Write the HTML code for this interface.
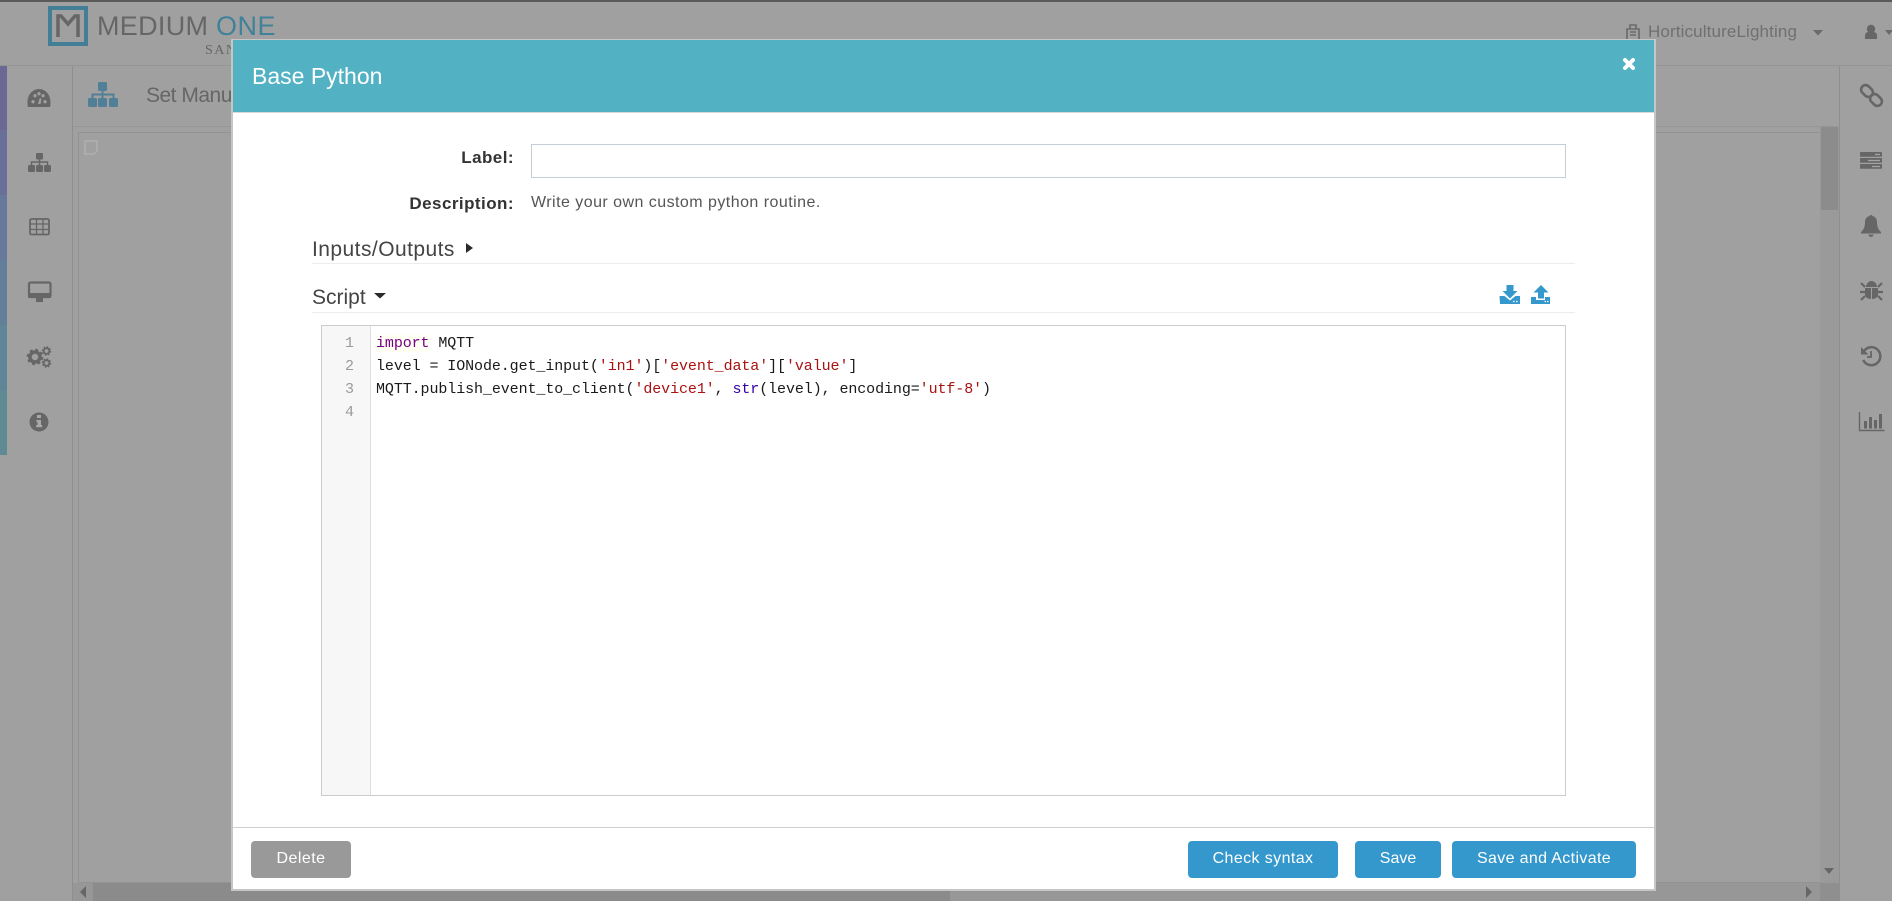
<!DOCTYPE html>
<html lang="en">
<head>
<meta charset="utf-8">
<title>Base Python</title>
<style>
html,body{margin:0;padding:0;width:1892px;height:901px;overflow:hidden;background:#a0a0a0;font-family:"Liberation Sans",sans-serif}
div,span,button,input,pre,svg{box-sizing:border-box}
.a{position:absolute}
.t{position:absolute;white-space:nowrap;line-height:1}
svg{position:absolute;overflow:visible}
.strip{position:absolute;left:0;width:7px;height:65px}
.modal{position:absolute;left:231px;top:39px;width:1425px;height:852px;background:#fff;border:2px solid #c6c6c6;border-top-width:1px;}
button{position:absolute;top:841px;height:37px;border:0;border-radius:4px;background:#3498cd;color:#fff;font:16px "Liberation Sans",sans-serif;padding:0 0 2px 0;text-align:center}
.code{position:absolute;left:376px;top:332px;margin:0;font:15px/23px "Liberation Mono",monospace;letter-spacing:-.09px;color:#1a1a1a;white-space:pre}
.k{color:#770088;background:#fffef2}.s{color:#aa1111}.b{color:#3300aa}
.n{position:absolute;left:322px;width:32px;text-align:right;font:15px/23px "Liberation Mono",monospace;color:#9a9a9a}
</style>
</head>
<body>
<!-- page behind overlay -->
<div class="a" style="left:0;top:0;width:1892px;height:2px;background:#5a5a5a"></div>
<div class="a" style="left:0;top:65px;width:1892px;height:1px;background:#959595"></div>
<div class="strip" style="top:66px;background:#6b6894"></div>
<div class="strip" style="top:130px;background:#686f98"></div>
<div class="strip" style="top:195px;background:#66799a"></div>
<div class="strip" style="top:260px;background:#617f98"></div>
<div class="strip" style="top:325px;background:#5f8596"></div>
<div class="strip" style="top:390px;background:#5f8a93"></div>
<div class="a" style="left:72px;top:66px;width:1px;height:835px;background:#8f8f8f"></div>
<div class="a" style="left:73px;top:126px;width:1766px;height:1px;background:#969696"></div>
<div class="a" style="left:78px;top:132px;width:1742px;height:751px;border:1px solid #939393;border-right:0"></div>
<div class="a" style="left:1820px;top:127px;width:19px;height:774px;background:#9a9a9a"></div>
<div class="a" style="left:1821px;top:127px;width:17px;height:83px;background:#8c8c8c"></div>
<div class="a" style="left:1839px;top:66px;width:1px;height:835px;background:#8f8f8f"></div>
<div class="a" style="left:73px;top:883px;width:1747px;height:18px;background:#979797"></div>
<div class="a" style="left:93px;top:883px;width:857px;height:18px;background:#8b8b8b"></div>
<div class="a" style="left:1820px;top:883px;width:19px;height:18px;background:#8f8f8f"></div>

<!-- logo -->
<div class="a" style="left:48px;top:6px;width:40px;height:40px;border:4px solid #427f97"></div>
<svg style="left:0;top:0" width="100" height="50"><path d="M58 37V16h3l7 8 7-8h3v21" fill="none" stroke="#666" stroke-width="3.500"/></svg>
<div class="t" style="left:97px;top:13px;font-size:27px;letter-spacing:.3px;color:#666">MEDIUM</div>
<div class="t" style="left:216px;top:13px;font-size:27px;letter-spacing:.5px;color:#3f8299">ONE</div>
<div class="t" style="left:205px;top:43px;font:14px 'Liberation Serif',serif;letter-spacing:1.5px;color:#666">SANDBOX</div>

<!-- user bar -->
<svg style="left:0;top:0" width="1892" height="60">
  <path d="M1627 29h12v11h-12zM1630 25h6v4h-6z" fill="none" stroke="#6a6a6a" stroke-width="1.6"/>
  <path d="M1630 32h6M1630 35h6" stroke="#6a6a6a" stroke-width="1.5"/>
  <path d="M1813 30h10l-5 5.5zM1885 30h8l-4 5z" fill="#6a6a6a"/>
  <circle cx="1871" cy="29" r="4.2" fill="#666"/>
  <path d="M1865 39v-3.5c0-2.5 2-3.5 3.5-3.5h5c1.500 0 3.500 1 3.500 3.500v3.500z" fill="#666"/>
</svg>
<div class="t" style="left:1648px;top:23px;font-size:17px;letter-spacing:.13px;color:#707070">HorticultureLighting</div>

<!-- content head -->
<svg style="left:0;top:0" width="130" height="120">
  <g fill="#527f98"><rect x="98" y="82" width="9" height="9" rx="1.500"/><rect x="88" y="98" width="9" height="9" rx="1.500"/><rect x="98" y="98" width="9" height="9" rx="1.500"/><rect x="109" y="98" width="9" height="9" rx="1.500"/></g>
  <path d="M102.500 91v7M92.500 98v-3.500h21V98" fill="none" stroke="#527f98" stroke-width="2"/>
</svg>
<div class="t" style="left:146px;top:85px;font-size:21px;letter-spacing:-.5px;color:#666">Set Manual</div>
<svg style="left:0;top:0" width="110" height="170"><path d="M85 141h12v10l-3 3h-9z" fill="none" stroke="#b0b0b0" stroke-width="1.500" stroke-linejoin="round"/></svg>

<!-- left icons -->
<svg style="left:0;top:0" width="72" height="440" fill="#666">
  <path fill-rule="evenodd" d="M28 107c-.5-1.500-.5-3-.5-5 0-7 5-13 11.500-13s11.500 6 11.500 13c0 2-.1 3.500-.5 5zM33 100a1.700 1.700 0 1 0 .1 0zM45 100a1.700 1.700 0 1 0 .1 0zM35 94a1.700 1.700 0 1 0 .1 0zM43 94a1.700 1.700 0 1 0 .1 0zM39 92a1.700 1.700 0 1 0 .1 0zM38 104h2.500l1-5.500h-2z"/>
  <rect x="36" y="153" width="7" height="6.500" rx="1"/><rect x="28" y="165" width="7" height="7" rx="1.500"/><rect x="36" y="165" width="7" height="7" rx="1.500"/><rect x="44" y="165" width="7" height="7" rx="1.500"/>
  <path d="M39.500 159v6M31.500 165v-3h16v3" fill="none" stroke="#666" stroke-width="1.500"/>
  <g fill="none" stroke="#666"><rect x="30" y="219" width="19" height="15.500" rx="1.500" stroke-width="1.800"/><path d="M30 224h19M30 229.500h19M36.500 219v15.500M43 219v15.500" stroke-width="1.300"/></g>
  <rect x="29" y="282.500" width="21.500" height="14.500" rx="1.500" fill="none" stroke="#666" stroke-width="2.200"/><rect x="28" y="293" width="23" height="5" rx="1"/><rect x="36" y="298" width="7" height="4"/>
  <g fill="none" stroke="#666">
    <circle cx="35" cy="357" r="5" stroke-width="3.500"/><circle cx="35" cy="357" r="7" stroke-width="2.500" stroke-dasharray="2.800 2.700"/>
    <circle cx="46.500" cy="351" r="2.800" stroke-width="1.800"/><circle cx="46.500" cy="351" r="4" stroke-width="1.500" stroke-dasharray="1.600 1.550"/>
    <circle cx="46.500" cy="363" r="2.800" stroke-width="1.800"/><circle cx="46.500" cy="363" r="4" stroke-width="1.500" stroke-dasharray="1.600 1.550"/>
  </g>
  <circle cx="39" cy="422" r="9.500"/>
  <path d="M37 415h4v3h-4zM36.500 420h4.500v5h1.200v2.200h-6v-2.200h1.300v-2.800h-1z" fill="#a8a8a8"/>
</svg>

<!-- right icons -->
<svg style="left:0;top:0" width="1892" height="440" fill="#666">
  <g fill="none" stroke="#666" stroke-width="2.600">
    <rect x="-6.500" y="-4.500" width="13" height="9" rx="4.500" transform="translate(1867 91) rotate(45)"/>
    <rect x="-6.500" y="-4.500" width="13" height="9" rx="4.500" transform="translate(1876 100) rotate(45)"/>
  </g>
  <rect x="1860" y="152" width="22" height="4.800" rx=".8"/><rect x="1860" y="158" width="22" height="4.800" rx=".8"/><rect x="1860" y="164" width="22" height="4.800" rx=".8"/>
  <path d="M1875 154.500h5M1868 160.500h12M1872 166.500h8" stroke="#a5a5a5" stroke-width="1.200"/>
  <path d="M1861 232c2.500-2 4-5 4-10 0-3.500 2-5.500 4.500-6 .2-1.400 2.800-1.400 3 0 2.500.5 4.500 2.500 4.500 6 0 5 1.500 8 4 10v1.500h-20z"/><path d="M1868.500 234.500h5a2.500 2.500 0 0 1-5 0z"/>
  <path d="M1865 288h6v11c-3 0-5.500-1.500-6-4zM1872 288h6v7c-.5 2.500-3 4-6 4zM1866 287c0-3 2.500-6 5.500-6s5.500 3 5.500 6z"/>
  <path d="M1861 283l4 4M1882 283l-4 4M1860 292h5M1883 292h-5M1861 300l4-4M1882 300l-4-4" stroke="#666" stroke-width="2.200" fill="none"/>
  <path d="M1864 351a9 9 0 1 1 -.8 9" fill="none" stroke="#666" stroke-width="2.500"/>
  <path d="M1861 347l7.500 7.500h-7.500z"/>
  <path d="M1871 351v6h-4" fill="none" stroke="#666" stroke-width="1.800"/>
  <path d="M1859.500 412v18.500h25" fill="none" stroke="#666" stroke-width="1.400"/>
  <rect x="1864" y="421" width="3" height="7.500"/><rect x="1869" y="417" width="3" height="11.500"/><rect x="1874" y="420" width="3" height="8.500"/><rect x="1879" y="414" width="3" height="14.500"/>
  <path d="M1824 868h10l-5 6z" fill="#666"/>
  <path d="M1806 886l6 6-6 6z" fill="#666"/>
  <path d="M86 886l-6 6 6 6z" fill="#666"/>
</svg>

<!-- modal -->
<div class="modal"></div>
<div class="a" style="left:233px;top:40px;width:1421px;height:72px;background:#52b2c4"></div>
<div class="a" style="left:233px;top:112px;width:1421px;height:1px;background:#d8d8d8"></div>
<div class="t" style="left:252px;top:65px;font-size:23px;color:#fff">Base Python</div>
<svg style="left:0;top:0" width="1660" height="80"><path d="M1625 60l8 8M1633 60l-8 8" stroke="#fff" stroke-width="4" stroke-linecap="round"/></svg>

<div class="t" style="right:1378px;top:149px;font-size:17px;font-weight:bold;letter-spacing:.45px;color:#333">Label:</div>
<input class="a" type="text" style="left:531px;top:144px;width:1035px;height:34px;border:1px solid #c5cdd6;background:#fff;outline:0">
<div class="t" style="right:1378px;top:195px;font-size:17px;font-weight:bold;letter-spacing:.45px;color:#333">Description:</div>
<div class="t" style="left:531px;top:195px;font-size:16px;letter-spacing:.46px;color:#555">Write your own custom python routine.</div>

<div class="t" style="left:312px;top:239px;font-size:21px;letter-spacing:.45px;color:#444">Inputs/Outputs</div>
<div class="a" style="left:312px;top:263px;width:1263px;height:1px;background:#ececec"></div>
<div class="t" style="left:312px;top:287px;font-size:21px;color:#444">Script</div>
<div class="a" style="left:312px;top:312px;width:1263px;height:1px;background:#ececec"></div>
<svg style="left:0;top:0" width="1600" height="320">
  <path d="M466 243l7 5-7 5z" fill="#2b2b2b"/>
  <path d="M374 293h12l-6 5.500z" fill="#2b2b2b"/>
  <g fill="#3498cd">
    <path d="M1506.500 285h7v6h4l-7.500 7.500-7.500-7.500h4z"/>
    <path d="M1499.500 296h5l5.500 4.500 5.500-4.500h4.500v8h-20z"/>
    <path d="M1541 285l7.500 7.500h-4.500v6h-6v-6h-4.500z"/>
    <path d="M1531 297h5v3h9v-3h5v7h-19z"/>
  </g>
  <path d="M1513 301.500h1.500M1516 301.500h1.500M1544.500 301.500h1.500M1547 301.500h1.500" stroke="#fff" stroke-width="1.200"/>
</svg>

<!-- editor -->
<div class="a" style="left:321px;top:325px;width:1245px;height:471px;border:1px solid #ccc;background:#fff"></div>
<div class="a" style="left:322px;top:326px;width:49px;height:469px;background:#f7f7f7;border-right:1px solid #ddd"></div>
<div class="n" style="top:332px">1</div>
<div class="n" style="top:355px">2</div>
<div class="n" style="top:378px">3</div>
<div class="n" style="top:401px">4</div>
<pre class="code"><span class="k">import</span> MQTT
level = IONode.get_input(<span class="s">'in1'</span>)[<span class="s">'event_data'</span>][<span class="s">'value'</span>]
MQTT.publish_event_to_client(<span class="s">'device1'</span>, <span class="b">str</span>(level), encoding=<span class="s">'utf-8'</span>)
</pre>

<!-- footer -->
<div class="a" style="left:233px;top:827px;width:1421px;height:1px;background:#cfcfcf"></div>
<button style="left:251px;width:100px;background:#999;letter-spacing:.45px">Delete</button>
<button style="left:1188px;width:150px;letter-spacing:.4px">Check syntax</button>
<button style="left:1355px;width:86px">Save</button>
<button style="left:1452px;width:184px;letter-spacing:.35px">Save and Activate</button>
</body>
</html>
